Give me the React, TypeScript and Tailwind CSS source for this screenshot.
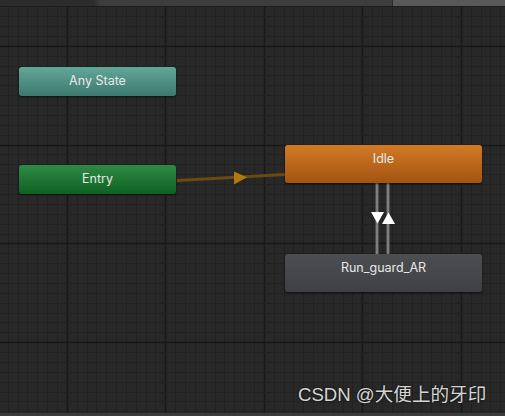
import React from "react";

// page coords of the editor grid
const MAJOR_X = 67.3;
const MAJOR_Y = 46.3;
const STEP_X = 9.85;
const STEP_Y = 9.88;
const TOP = 7;

function GridLines() {
  const lines: React.ReactNode[] = [];
  for (let k = -7; k <= 45; k++) {
    const x = Math.floor(MAJOR_X + k * STEP_X) + 0.5;
    if (x < 0 || x > 505) continue;
    const major = k % 10 === 0;
    lines.push(
      <line
        key={"v" + k}
        x1={x}
        x2={x}
        y1={0}
        y2={420}
        stroke={major ? "#181818" : "#212121"}
        strokeWidth={major ? 1.4 : 1}
      />
    );
  }
  for (let k = -5; k <= 38; k++) {
    const y = Math.floor(MAJOR_Y + k * STEP_Y) + 0.5;
    const major = k % 10 === 0;
    lines.push(
      <line
        key={"h" + k}
        x1={0}
        x2={505}
        y1={y}
        y2={y}
        stroke={major ? "#181818" : "#212121"}
        strokeWidth={major ? 1.4 : 1}
      />
    );
  }
  return <>{lines}</>;
}

function Transitions() {
  return (
    <>
      {/* Entry -> Idle */}
      <line x1={177} y1={180.5} x2={285} y2={174.5} stroke="#6a4a12" strokeWidth={3} />
      <polygon points="234,171.5 234,184.5 247,177.3" fill="#b0780e" />

      {/* Idle <-> Run_guard_AR */}
      <rect x={375.5} y={183} width={3} height={71} fill="#707070" />
      <rect x={376.5} y={183} width={1} height={71} fill="#8c8c8c" />
      <rect x={386.5} y={183} width={3} height={71} fill="#707070" />
      <rect x={387.5} y={183} width={1} height={71} fill="#8c8c8c" />
      <polygon points="371,212 384,212 377.5,223.5" fill="#ffffff" />
      <polygon points="382,224 395,224 388.5,212.5" fill="#ffffff" />
    </>
  );
}

type NodeProps = {
  label: string;
  x: number;
  y: number;
  w: string;
  h: string;
  fill: string;
};

function StateNode({ label, x, y, fill, w, h }: NodeProps) {
  return (
    <div
      className={`absolute rounded-[3px] shadow-[0_1px_2px_rgba(0,0,0,0.6)] ${w} ${h} ${fill}`}
      style={{ left: x, top: y - TOP }}
    >
      <div className="flex h-[28px] items-center justify-center text-[12.5px] text-[#e8e8e8]">
        {label}
      </div>
    </div>
  );
}

export default function App() {
  return (
    <div
      className="relative flex h-[416px] w-[505px] flex-col overflow-hidden bg-[#282828]"
      style={{ fontFamily: "Inter, 'Noto Sans', sans-serif" }}
    >
      {/* toolbar strip */}
      <div className="flex h-[7px] shrink-0 border-b border-[#1c1c1c] bg-[#3d3d3d]">
        <div className="h-full w-[94px] bg-[#2c2c2c]" />
        <div className="h-full w-[6px] bg-linear-to-r from-[#2c2c2c] to-[#3d3d3d]" />
        <div className="h-full flex-1" />
        <div className="h-full w-[113px] border-l border-[#2a2a2a] bg-[#585858]" />
      </div>

      {/* graph canvas */}
      <div className="relative flex-1">
        <svg className="absolute inset-0" width={505} height={406}>
          <g transform={`translate(0,${-TOP})`}>
            <GridLines />
            <Transitions />
          </g>
        </svg>

        <StateNode
          label="Any State"
          x={19}
          y={67}
          w="w-[157px]"
          h="h-[29px]"
          fill="bg-linear-to-b from-[#61a898] to-[#3e786f]"
        />
        <StateNode
          label="Entry"
          x={19}
          y={165}
          w="w-[157px]"
          h="h-[29px]"
          fill="bg-linear-to-b from-[#2f8a45] to-[#0b6220]"
        />
        <StateNode
          label="Idle"
          x={285}
          y={145}
          w="w-[197px]"
          h="h-[38px]"
          fill="bg-linear-to-b from-[#d27b26] to-[#a35411]"
        />
        <StateNode
          label="Run_guard_AR"
          x={285}
          y={254}
          w="w-[197px]"
          h="h-[38px]"
          fill="bg-linear-to-b from-[#4d4e51] to-[#3f4043]"
        />

        {/* watermark */}
        <div
          className="absolute left-[298px] top-[379px] text-[18.6px] leading-none text-[#d6d6d6] [text-shadow:0_0_2px_rgba(0,0,0,0.9)]"
          style={{ fontFamily: "'Liberation Sans', 'Noto Sans CJK SC', sans-serif" }}
        >
          CSDN @大便上的牙印
        </div>
      </div>

      <div className="h-[3px] shrink-0 bg-[#3b3b3b]" />
    </div>
  );
}
